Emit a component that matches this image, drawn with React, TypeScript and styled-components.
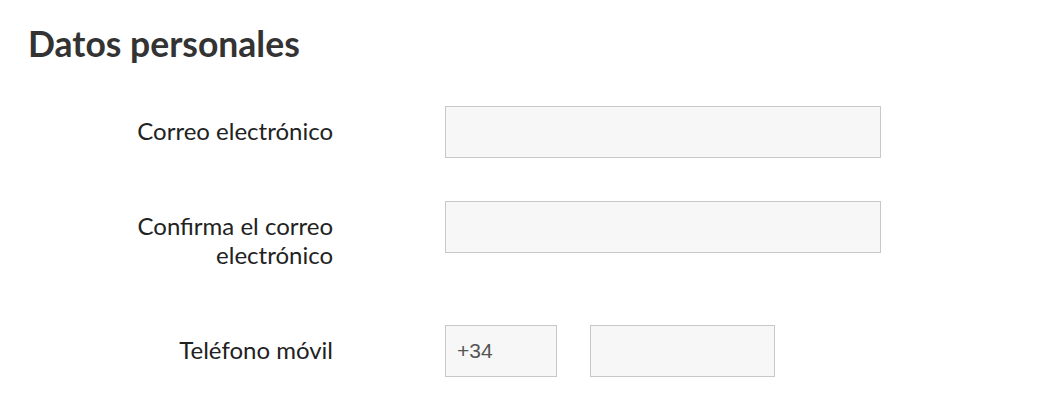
import React from "react";
import styled, { createGlobalStyle } from "styled-components";

const Global = createGlobalStyle`
  html, body { margin: 0; padding: 0; background: #fff; }
  body { font-family: Lato, "Open Sans", sans-serif; }
`;

const Page = styled.div`
  padding: 22px 28px 0 28px;
`;

const Title = styled.h2`
  margin: 0 0 40px 0;
  font-family: Lato, sans-serif;
  font-weight: 700;
  font-size: 35.5px;
  line-height: 44px;
  color: #333;
`;

const Form = styled.div`
  display: flex;
  flex-direction: column;
  gap: 43px;
`;

const Row = styled.div`
  display: grid;
  grid-template-columns: 305px 436px;
  column-gap: 112px;
  align-items: start;
`;

const Label = styled.label`
  text-align: right;
  padding: 10px 0 13px 100px;
  font-size: 24px;
  line-height: 29px;
  color: #222;
`;

const Input = styled.input<{ $w?: number }>`
  box-sizing: border-box;
  width: ${(p) => (p.$w ? `${p.$w}px` : "100%")};
  height: 52px;
  border: 1px solid #c8c8c8;
  background: #f7f7f7;
  padding: 0 11px;
  font-family: "Liberation Sans", Arial, sans-serif;
  font-size: 21px;
  color: #555;
  outline: none;
`;

const PhoneGroup = styled.div`
  display: flex;
  gap: 33px;
`;

export default function App() {
  return (
    <>
      <Global />
      <Page>
        <Title>Datos personales</Title>
        <Form>
          <Row>
            <Label>Correo electrónico</Label>
            <Input type="email" />
          </Row>
          <Row>
            <Label>Confirma el correo electrónico</Label>
            <Input type="email" />
          </Row>
          <Row>
            <Label>Teléfono móvil</Label>
            <PhoneGroup>
              <Input $w={112} defaultValue="+34" />
              <Input $w={185} />
            </PhoneGroup>
          </Row>
        </Form>
      </Page>
    </>
  );
}
